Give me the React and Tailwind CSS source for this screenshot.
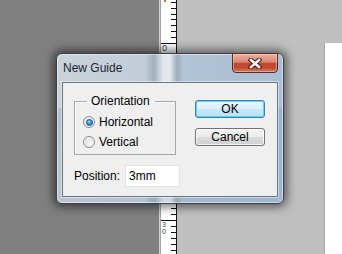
import React from "react";

const font = { fontFamily: '"Liberation Sans", Arial, sans-serif' };

function Ruler() {
  const topTicks = [2, 7.6, 13.5, 19.4, 25.3, 31.2, 37.1];
  const bottomTicks = [202.3, 208.2, 214.1, 225.9, 231.8, 237.7, 243.6, 249.5];
  return (
    <div className="flex h-full w-[18px] shrink-0">
      <div className="w-[1px] bg-[#d2d2d2]" />
      <div className="w-[1px] bg-[#a3a3a3]" />
      <div className="relative flex-1 bg-white">
        {topTicks.concat(bottomTicks).map((y) => (
          <div
            key={y}
            className="absolute right-0 h-[1px] w-[5px] bg-[#111]"
            style={{ top: Math.round(y) }}
          />
        ))}
        <div className="absolute left-0 right-0 top-[43px] h-[1px] bg-[#111]" />
        <div className="absolute left-0 right-0 top-[220px] h-[1px] bg-[#111]" />
        <div className="absolute left-[3px] top-0 h-[2px] w-[2px] bg-[#c07a30]" />
        <div
          className="absolute left-[1px] top-[44px] text-[9px] leading-[9px] text-[#24407a]"
          style={font}
        >
          0
        </div>
        <div
          className="absolute left-[1px] top-[221px] flex flex-col text-[7px] leading-[7px] text-[#24407a]"
          style={font}
        >
          <span>3</span>
          <span>0</span>
        </div>
      </div>
      <div className="w-[1px] bg-[#151515]" />
    </div>
  );
}

function Radio({ checked, label }) {
  return (
    <div className="flex h-[20px] items-center gap-[4px]">
      <div className="flex h-[12px] w-[12px] items-center justify-center rounded-full border border-[#8a8c8e] bg-[radial-gradient(circle_at_60%_65%,#f6f6f6_0%,#e4e4e4_55%,#cfcfcf_100%)] shadow-[inset_0_0_0_1px_rgba(255,255,255,0.7)]">
        {checked && (
          <div className="h-[7px] w-[7px] rounded-full border border-[#1d4f7f] bg-[radial-gradient(circle_at_40%_35%,#9fe0ff_0%,#3a9be0_45%,#14558f_100%)]" />
        )}
      </div>
      <span className="text-[12px] leading-[14px] text-black">{label}</span>
    </div>
  );
}

function CloseX() {
  return (
    <svg width="14" height="11" viewBox="0 0 14 11">
      <path d="M3 2 L11 9 M11 2 L3 9" stroke="#4a1a12" strokeWidth="4.6" strokeLinecap="square" />
      <path d="M3 2 L11 9 M11 2 L3 9" stroke="#ffffff" strokeWidth="2.6" strokeLinecap="square" />
    </svg>
  );
}

function Dialog() {
  return (
    <div
      className="absolute left-[56px] top-[53px] flex h-[151px] w-[228px] flex-col rounded-[6px] border border-[#3b4048] bg-[linear-gradient(to_right,rgba(0,0,0,0)_0%,rgba(0,0,0,0)_39%,rgba(70,90,110,0.25)_43%,rgba(255,255,255,0.55)_47%,rgba(255,255,255,0.6)_50%,rgba(60,70,80,0.2)_53%,rgba(0,0,0,0)_56%),linear-gradient(to_right,#cad2da_0%,#c2cdd8_40%,#b0c3d6_60%,#a9bfd5_100%)] shadow-[0_0_10px_3px_rgba(0,0,0,0.55),inset_0_0_0_1px_rgba(255,255,255,0.45)]"
      style={font}
    >
      <div className="pointer-events-none absolute inset-x-[1px] bottom-[1px] top-[54px] rounded-b-[5px] bg-[linear-gradient(to_bottom,rgba(110,140,175,0.28),rgba(110,140,175,0.18))]" />
      <div className="relative flex h-[28px] items-start justify-between pl-[6px] pr-[5px]">
        <span className="mt-[7px] text-[12px] leading-[14px] text-[#1c2430]">New Guide</span>
        <div className="-mt-[1px] flex h-[20px] w-[46px] items-center justify-center rounded-b-[4px] border border-[#5b2a22] bg-[linear-gradient(to_bottom,#eab1a3_0%,#d98771_45%,#c5472e_52%,#c04a31_75%,#d97a5e_100%)] shadow-[inset_0_0_0_1px_rgba(255,220,210,0.45)]">
          <CloseX />
        </div>
      </div>
      <div className="relative mx-[5px] flex h-[115px] flex-col border border-[#6b7785] bg-[#efefef] pl-[11px] pt-[11px] shadow-[0_0_0_1px_rgba(255,255,255,0.45)]">
        <div className="flex">
          <fieldset className="h-[61px] w-[102px] border border-[#a5a8ab] px-[8px] pb-[2px] shadow-[inset_1px_1px_0_rgba(255,255,255,0.8)]">
            <legend className="ml-[4px] pl-[4px] pr-[5px] text-[12px] leading-[14px] text-black">
              Orientation
            </legend>
            <div className="mt-[4px] flex flex-col">
              <Radio checked label="Horizontal" />
              <Radio label="Vertical" />
            </div>
          </fieldset>
          <div className="ml-[19px] mt-[6px] flex flex-col gap-[10px]">
            <div className="flex h-[18px] w-[70px] items-center justify-center rounded-[3px] border border-[#3c7fb1] bg-[linear-gradient(to_bottom,#eaf6fd_0%,#d9f0fc_50%,#c6e8fa_51%,#b9e1f6_100%)] text-[12px] leading-[14px] text-black shadow-[inset_0_0_0_1px_#62cff6]">
              OK
            </div>
            <div className="flex h-[18px] w-[70px] items-center justify-center rounded-[3px] border border-[#707070] bg-[linear-gradient(to_bottom,#f3f3f3_0%,#ebebeb_50%,#dddddd_51%,#cfcfcf_100%)] text-[12px] leading-[14px] text-black shadow-[inset_0_0_0_1px_rgba(255,255,255,0.8)]">
              Cancel
            </div>
          </div>
        </div>
        <div className="mt-[10px] flex items-center gap-[5px]">
          <span className="text-[12px] leading-[14px] text-black">Position:</span>
          <div className="flex h-[22px] w-[55px] items-center border border-[#e1e4e9] bg-white pl-[3px] text-[12px] leading-[14px] text-black">
            3mm
          </div>
        </div>
      </div>
    </div>
  );
}

export default function App() {
  return (
    <div className="relative flex h-[254px] w-[342px] overflow-hidden bg-[#bfbfbf]">
      <div className="h-full w-[159px] shrink-0 bg-[#808080]" />
      <Ruler />
      <div className="flex flex-1 pl-[148px] pt-[43px]">
        <div className="h-full flex-1 bg-white shadow-[-1px_0_1px_rgba(0,0,0,0.12)]" />
      </div>
      <Dialog />
    </div>
  );
}
